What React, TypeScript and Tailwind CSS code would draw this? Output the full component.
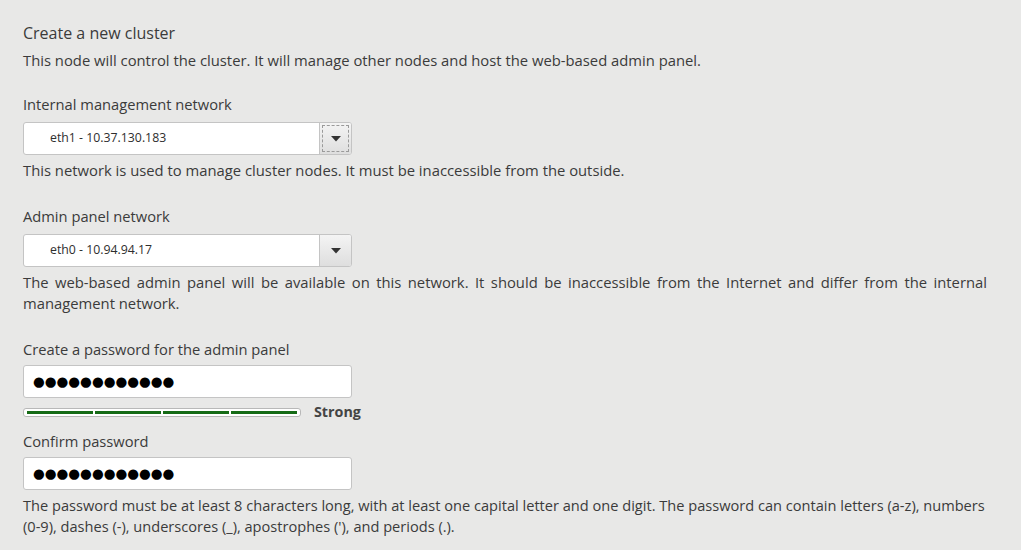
import React from "react";

function Select({ value, focused }: { value: string; focused?: boolean }) {
  return (
    <div className="flex h-[33px] w-[329px] rounded-[3px] border border-[#c4c4c4] bg-white overflow-hidden">
      <div className="flex-1 flex items-center pl-[26px] text-[12.3px] text-[#2e2e2e]">{value}</div>
      <div className="w-[32px] border-l border-[#c4c4c4] bg-gradient-to-b from-[#f4f4f4] to-[#dedede] flex items-center justify-center p-[2px]">
        <div className={"w-full h-full flex items-center justify-center " + (focused ? "border border-dashed border-[#9a9a9a]" : "")}>
          <svg width="10" height="6" viewBox="0 0 10 6">
            <path d="M0 0 L10 0 L5 5.5 Z" fill="#333" />
          </svg>
        </div>
      </div>
    </div>
  );
}

function PasswordInput() {
  return (
    <div className="flex items-center h-[33px] w-[329px] rounded-[3px] border border-[#c4c4c4] bg-white pl-[9px]">
      <span className="text-[13.5px] leading-none text-black" style={{ fontFamily: '"DejaVu Sans", sans-serif' }}>
        {"●".repeat(12)}
      </span>
    </div>
  );
}

export default function App() {
  return (
    <div
      className="w-[1021px] h-[550px] bg-[#e8e8e7] text-[#3b3b3b] overflow-hidden"
      style={{ fontFamily: '"Open Sans", sans-serif' }}
    >
      <div className="pl-[23px] w-[1000px] flex flex-col">
        <div className="mt-[22px] text-[16px] leading-[22px]">Create a new cluster</div>
        <p className="mt-[6px] text-[14.8px] leading-[21px]">
          This node will control the cluster. It will manage other nodes and host the web-based admin panel.
        </p>

        <div className="mt-[23px] text-[14.7px] leading-[21px]">Internal management network</div>
        <div className="mt-[7px]">
          <Select value="eth1 - 10.37.130.183" focused />
        </div>
        <p className="mt-[5px] text-[14.8px] leading-[21px]">
          This network is used to manage cluster nodes. It must be inaccessible from the outside.
        </p>

        <div className="mt-[25px] text-[14.7px] leading-[21px]">Admin panel network</div>
        <div className="mt-[7px]">
          <Select value="eth0 - 10.94.94.17" />
        </div>
        <p className="mt-[5px] w-[964px] text-[14.8px] leading-[21px] text-justify">
          The web-based admin panel will be available on this network. It should be inaccessible from the Internet and differ from the internal management network.
        </p>

        <div className="mt-[25px] text-[14.7px] leading-[21px]">Create a password for the admin panel</div>
        <div className="mt-[5px]">
          <PasswordInput />
        </div>
        <div className="mt-[10px] h-[9px] flex items-center">
          <div className="w-[278px] h-[9px] rounded-[3px] border border-[#b8b8b8] bg-white flex items-center gap-[2px] px-[3px]">
            <div className="flex-1 h-[3px] bg-[#166b16]" />
            <div className="flex-1 h-[3px] bg-[#166b16]" />
            <div className="flex-1 h-[3px] bg-[#166b16]" />
            <div className="flex-1 h-[3px] bg-[#166b16]" />
          </div>
          <span className="ml-[13px] text-[14.3px] leading-none font-bold text-[#444]">Strong</span>
        </div>

        <div className="mt-[14px] text-[14.7px] leading-[21px]">Confirm password</div>
        <div className="mt-[5px]">
          <PasswordInput />
        </div>
        <p className="mt-[5px] text-[14.6px] leading-[21px]">
          The password must be at least 8 characters long, with at least one capital letter and one digit. The password can contain letters (a-z), numbers (0-9), dashes (-), underscores (_), apostrophes ('), and periods (.).
        </p>
      </div>
    </div>
  );
}
